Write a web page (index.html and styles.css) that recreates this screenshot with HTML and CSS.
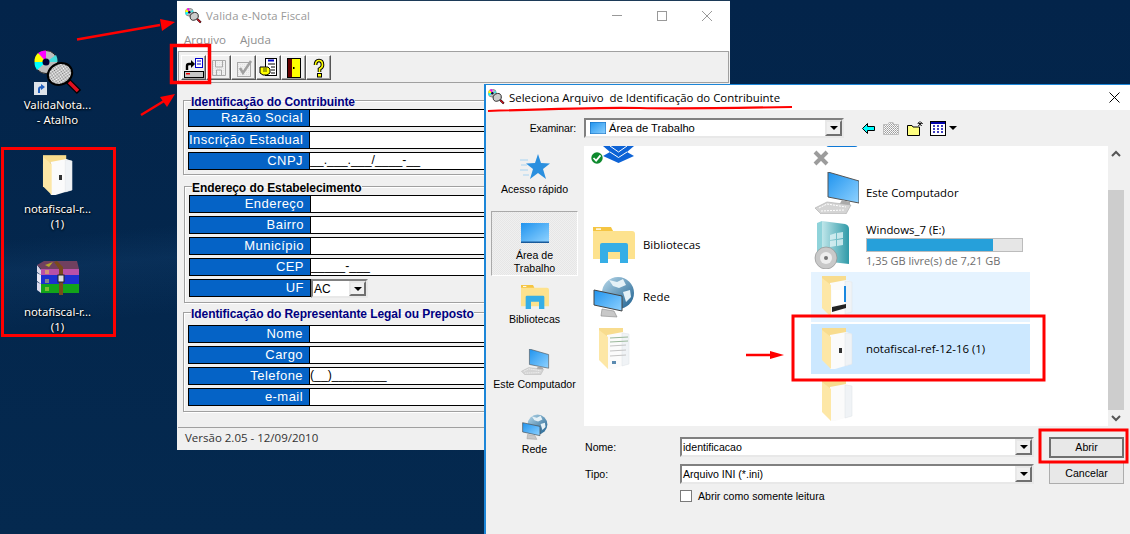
FILE: index.html
```html
<!DOCTYPE html>
<html lang="pt-BR">
<head>
<meta charset="utf-8">
<title>Valida e-Nota Fiscal</title>
<link rel="stylesheet" href="styles.css">
</head>
<body>
<svg class="defs" width="0" height="0" aria-hidden="true">
  <defs>
    <pattern id="dither" width="2" height="2" patternUnits="userSpaceOnUse">
      <rect width="2" height="2" fill="#fff"/><rect width="1" height="1" fill="#777"/><rect x="1" y="1" width="1" height="1" fill="#999"/>
    </pattern>
    <pattern id="dither2" width="2" height="2" patternUnits="userSpaceOnUse">
      <rect width="2" height="2" fill="#f0f0f0"/><rect width="1" height="1" fill="#e2e2e2"/>
    </pattern>
    <linearGradient id="scr" x1="0" y1="0" x2="1" y2="1">
      <stop offset="0" stop-color="#1f93ee"/><stop offset="1" stop-color="#8fd2ff"/>
    </linearGradient>
    <linearGradient id="glob" x1="0" y1="0" x2="1" y2="1">
      <stop offset="0" stop-color="#b8d9ea"/><stop offset="1" stop-color="#1c5f8f"/>
    </linearGradient>
    <linearGradient id="teal" x1="0" y1="0" x2="1" y2="0">
      <stop offset="0" stop-color="#bfe6ea"/><stop offset="1" stop-color="#2f9aa8"/>
    </linearGradient>
    <symbol id="app" viewBox="0 0 48 46">
      <circle cx="12" cy="12" r="11.5" fill="#bdbdbd" stroke="#222"/>
      <path d="M12 12 L4 3 A11.5 11.5 0 0 1 12 .5Z" fill="#f0f"/>
      <path d="M12 12 L.5 12 A11.5 11.5 0 0 1 4 3Z" fill="#ff0"/>
      <path d="M12 12 L3 20 A11.5 11.5 0 0 1 .5 12Z" fill="#0ff"/>
      <path d="M12 12 L22 5 A11.5 11.5 0 0 1 23.5 12Z" fill="#4dd"/>
      <circle cx="12" cy="12" r="3.5" fill="#003"/>
      <line x1="34" y1="31" x2="45" y2="42" stroke="#000" stroke-width="6"/>
      <line x1="35" y1="32" x2="44" y2="41" stroke="#e01020" stroke-width="3.5"/>
      <ellipse cx="26" cy="24" rx="12.5" ry="10.5" transform="rotate(-25 26 24)" fill="url(#dither)" stroke="#000" stroke-width="2"/>
    </symbol>
    <symbol id="fback" viewBox="0 0 32 42">
      <path d="M1 0H25V8H1Z" fill="#f8dc8e"/>
      <path d="M9 7L25 4L31 6V36L14 41H9Z" fill="#fbfbfb"/>
      <path d="M24 5L31 6V36L24 38Z" fill="#f0f3f6" stroke="#dfe3e7" stroke-width=".5"/>
      <path d="M1 2L10 9V41L1 32Z" fill="#fde7a6"/>
    </symbol>
    <symbol id="lib" viewBox="0 0 42 36">
      <path d="M0 3Q0 0 3 0H16L20 4H39Q42 4 42 7V32H0Z" fill="#fde28e"/>
      <path d="M0 0H18L20 4H0Z" fill="#f5c542"/>
      <rect x="3" y="1.400" width="5" height="1.400" fill="#fff"/>
      <path d="M7 36V18Q7 16 9 16H33Q35 16 35 18V36H27V25H15V36Z" fill="#36aee6"/>
    </symbol>
    <symbol id="pc" viewBox="0 0 44 42">
      <path d="M13 0L44 9V31L13 25Z" fill="url(#scr)" stroke="#555"/>
      <path d="M27 28L35 30V33H24Z" fill="#aaa"/>
      <path d="M0 36L12 30L36 33L31 42H6Z" fill="#d4d4d4" stroke="#aaa" stroke-width=".6"/>
      <path d="M4 36L12 32L31 35M6 39L29 38" stroke="#fff" fill="none" stroke-dasharray="2 1"/>
    </symbol>
    <symbol id="net" viewBox="0 0 42 42">
      <circle cx="25" cy="17" r="16" fill="url(#glob)"/>
      <path d="M16 4L24 6L30 3L33 9L26 12L20 10ZM30 16L37 14L38 21L33 26Z" fill="#e5f1f7"/>
      <path d="M1 14L29 20V35L1 29Z" fill="url(#scr)" stroke="#444"/>
      <path d="M9 33L21 35L24 41L8 40Z" fill="#c8c8c8" stroke="#888" stroke-width=".6"/>
    </symbol>
    <symbol id="w7" viewBox="0 0 38 48">
      <path d="M9 0L32 3Q36 4 36 8V43L9 40Z" fill="url(#teal)"/>
      <path d="M9 0L4 2V38L9 40Z" fill="#8fd3da"/>
      <path d="M17 14L23 12V18L17 19ZM24 12L30 11V17L24 18ZM17 20L23 19V25L17 26ZM24 19L30 18V24L24 25Z" fill="#dff3f5" opacity=".8"/>
      <circle cx="13" cy="37" r="11" fill="#c9c9c9" stroke="#888" stroke-width=".6"/>
      <circle cx="13" cy="37" r="6" fill="#eee"/>
      <circle cx="13" cy="37" r="2" fill="#777"/>
    </symbol>
    <symbol id="ccheck" viewBox="0 0 16 16">
      <circle cx="8" cy="8" r="7.500" fill="#fff"/>
      <circle cx="8" cy="8" r="6.500" fill="#0e8a2e"/>
      <path d="M4 8L7 11L12 5" fill="none" stroke="#fff" stroke-width="2"/>
    </symbol>
  </defs>
</svg>

<main class="desktop">
  <section class="dicons">
    <div class="dicon">
      <div class="dicon-img">
        <svg class="ic-app" width="48" height="46"><use href="#app"/></svg>
        <svg class="ic-short" viewBox="0 0 13 13" width="13" height="13"><rect width="13" height="13" fill="#dde3ea"/><path d="M4 11V7Q4 4 8 4H7L7 2L11 5L7 8V6Q6 6 6 8V11Z" fill="#1f5fc0"/></svg>
      </div>
      <span>ValidaNota...<br>- Atalho</span>
    </div>
    <div class="dicon">
      <div class="dicon-img"><svg class="ic-fold" width="31" height="41"><use href="#fback"/><rect x="17" y="20" width="3" height="5" fill="#333"/></svg></div>
      <span>notafiscal-r...<br>(1)</span>
    </div>
    <div class="dicon">
      <div class="dicon-img">
        <svg class="ic-rar" viewBox="0 0 42 34" width="42" height="34">
          <path d="M0 21L4 23V32L0 29Z" fill="#dcdcee"/><path d="M4 23H42V32H4Z" fill="#12a41a"/>
          <path d="M0 12L4 14V23L0 20Z" fill="#e8e8f4"/><path d="M4 14H42V23H4Z" fill="#1c2fd0"/>
          <path d="M0 4L4 9V14L0 11Z" fill="#d8d8e8"/><path d="M4 8H42V14H4Z" fill="#b850a8"/>
          <path d="M0 4L7 0H40L42 8H4Z" fill="#70405f"/><path d="M8 4L16 1L12 6Z" fill="#b5a72a"/>
          <path d="M20 0L26 6V34H22V8L17 1Z" fill="#7a4a1c"/>
          <rect x="21" y="14" width="6" height="7" fill="#ddd" stroke="#222"/>
          <path d="M9 9V13M11 9V13M9 18V22M11 18V22M9 26V30M11 26V30" stroke="#e8d84a"/>
        </svg>
      </div>
      <span>notafiscal-r...<br>(1)</span>
    </div>
  </section>

  <section class="win-main">
    <header class="tbar">
      <svg class="tico" width="17" height="16"><use href="#app"/></svg>
      <span class="ttext">Valida e-Nota Fiscal</span>
      <div class="wctrls">
        <svg width="12" height="12" viewBox="0 0 12 12"><path d="M1 5.500H11" stroke="#999" fill="none"/></svg>
        <svg width="12" height="12" viewBox="0 0 12 12"><rect x="1.500" y="1.500" width="9" height="9" stroke="#999" fill="none"/></svg>
        <svg width="12" height="12" viewBox="0 0 12 12"><path d="M1 1L11 11M11 1L1 11" stroke="#999" fill="none"/></svg>
      </div>
    </header>
    <nav class="menu"><span>Arquivo</span><span>Ajuda</span></nav>
    <div class="toolbar">
      <div class="tbtn"><svg viewBox="0 0 20 20" width="20" height="20">
        <rect x="11.500" y=".5" width="7" height="9" fill="#fff" stroke="#00c"/><path d="M13 3H17M13 6H17" stroke="#00c"/>
        <path d="M3 12V8Q3 6 5 6H8" fill="none" stroke="#000" stroke-width="2.400"/><path d="M7 2L11 6L7 10Z" fill="#000"/>
        <rect x=".5" y="13.500" width="19" height="6" fill="#c6c6c6" stroke="#000"/><rect x="2" y="15" width="4" height="1.500" fill="#e00"/>
      </svg></div>
      <div class="tbtn"><svg viewBox="0 0 20 20" width="20" height="20">
        <path d="M3.500 2.500H16.500V17.500H3.500Z" fill="url(#dither2)" stroke="#a8a8a8"/><path d="M6.500 3V9H13.500V3M7.500 17V12H12.500V17" fill="none" stroke="#a8a8a8"/>
      </svg></div>
      <div class="tbtn"><svg viewBox="0 0 20 20" width="20" height="20">
        <rect x="3.500" y="4.500" width="13" height="14" fill="url(#dither2)" stroke="#a8a8a8"/><path d="M6 10L9 15L17 3" fill="none" stroke="#a0a0a0" stroke-width="2.500"/>
      </svg></div>
      <div class="tbtn"><svg viewBox="0 0 20 20" width="20" height="20">
        <rect x="6.500" y=".5" width="11" height="17" fill="#fff" stroke="#000"/><path d="M9 2.500H15" stroke="#00c" stroke-width="2"/><path d="M9 6H16M12 9H16M12 12H16M12 15H16" stroke="#000"/>
        <path d="M1 9H9L11 11V15L8 17H4L1 15Z" fill="#ff0" stroke="#000"/><path d="M4 11H8M4 13H8" stroke="#000" stroke-width=".7"/>
      </svg></div>
      <div class="tbtn"><svg viewBox="0 0 20 20" width="20" height="20">
        <rect x="3.500" y=".5" width="13" height="19" fill="#600" stroke="#000"/><path d="M8 1H16V19H8Z" fill="#ff0"/><rect x="9" y="9" width="1.500" height="2" fill="#000"/>
      </svg></div>
      <div class="tbtn"><svg viewBox="0 0 20 20" width="20" height="20">
        <path d="M6.500 7Q6.500 2.500 10 2.500Q13.500 2.500 13.500 7Q13.500 9.500 10.500 11V14" fill="none" stroke="#000" stroke-width="3.600"/>
        <path d="M6.500 7Q6.500 2.500 10 2.500Q13.500 2.500 13.500 7Q13.500 9.500 10.500 11V14" fill="none" stroke="#ff0" stroke-width="1.600"/>
        <rect x="8.500" y="15.500" width="4" height="3.500" fill="#ff0" stroke="#000"/>
      </svg></div>
    </div>
    <div class="form">
      <fieldset class="grp grp-a">
        <legend class="navy">Identificação do Contribuinte</legend>
        <div class="row"><label>Razão Social</label><div class="val"></div></div>
        <div class="row row-x"><label>Inscrição Estadual</label><div class="val"></div></div>
        <div class="row"><label>CNPJ</label><div class="val">__.___.___/____-__</div></div>
      </fieldset>
      <fieldset class="grp grp-b">
        <legend>Endereço do Estabelecimento</legend>
        <div class="row"><label>Endereço</label><div class="val"></div></div>
        <div class="row"><label>Bairro</label><div class="val"></div></div>
        <div class="row"><label>Município</label><div class="val"></div></div>
        <div class="row"><label>CEP</label><div class="val">_____-___</div></div>
        <div class="row row-uf"><label>UF</label>
          <div class="combo combo-uf"><span>AC</span><i class="arrow"></i></div>
        </div>
      </fieldset>
      <fieldset class="grp grp-c">
        <legend class="navy">Identificação do Representante Legal ou Preposto</legend>
        <div class="row"><label>Nome</label><div class="val"></div></div>
        <div class="row"><label>Cargo</label><div class="val"></div></div>
        <div class="row"><label>Telefone</label><div class="val">(__)________</div></div>
        <div class="row"><label>e-mail</label><div class="val"></div></div>
      </fieldset>
    </div>
    <footer class="status">Versão 2.05 - 12/09/2010</footer>
  </section>

  <section class="win-dlg">
    <header class="dtitle">
      <svg width="17" height="16"><use href="#app"/></svg>
      <span class="dttext">Seleciona Arquivo  de Identificação do Contribuinte</span>
      <svg class="dclose" width="11" height="11" viewBox="0 0 11 11"><path d="M.5 .5L10.500 10.500M10.500 .5L.5 10.500" stroke="#000" fill="none"/></svg>
    </header>
    <div class="dlookin">
      <span class="dl-label">Examinar:</span>
      <div class="combo combo-look">
        <svg width="16" height="12" viewBox="0 0 16 12"><rect width="16" height="12" fill="url(#scr)" stroke="#1469b8"/></svg>
        <span>Área de Trabalho</span><i class="arrow"></i>
      </div>
      <div class="dtools">
        <svg width="13" height="11" viewBox="0 0 13 11"><path d="M.5 5.500L5.500 .5V3.500H12.500V7.500H5.500V10.500Z" fill="#0ff" stroke="#000"/></svg>
        <svg width="16" height="13" viewBox="0 0 16 13"><path d="M.5 2.500H5L6 .5H10L11 2.500H15.500V12.500H.5Z" fill="url(#dither)" stroke="#aaa" opacity=".7"/></svg>
        <svg width="17" height="15" viewBox="0 0 17 15"><path d="M.5 4.500H5L6 6H12.500V14.500H.5Z" fill="#ffff80" stroke="#000"/><path d="M13 0V5M10.500 2.500H16M11 1L15 5M15 1L11 5" stroke="#000" stroke-width=".7"/></svg>
        <div class="view-ic">
          <svg width="17" height="15" viewBox="0 0 17 15"><rect x=".5" y=".5" width="15" height="14" fill="#fff" stroke="#000"/><rect x="1" y="1" width="14" height="2" fill="#00a"/><path d="M3 5H5M7 5H9M11 5H13M3 8H5M7 8H9M11 8H13M3 11H5M7 11H9M11 11H13" stroke="#00a" stroke-width="1.500"/></svg>
          <i class="tri"></i>
        </div>
      </div>
    </div>
    <div class="dmid">
      <aside class="places">
        <div class="place">
          <svg class="pl-star" viewBox="0 0 30 26" width="30" height="26"><path d="M18 0L21 9L30 9.500L23 15L26 25L18 19L10 25L13 15L6 9.500L15 9Z" fill="#2a8fdf"/><path d="M0 6H8M1 11H7M0 16H8M3 21H9" stroke="#a8d4f2"/></svg>
          <span>Acesso rápido</span>
        </div>
        <div class="place place-on">
          <svg viewBox="0 0 28 20" width="28" height="20"><rect width="28" height="19" fill="url(#scr)"/><rect y="18.500" width="28" height="1.500" fill="#1a5a9a"/></svg>
          <span>Área de<br>Trabalho</span>
        </div>
        <div class="place">
          <svg width="28" height="24"><use href="#lib"/></svg>
          <span>Bibliotecas</span>
        </div>
        <div class="place">
          <svg width="30" height="28"><use href="#pc"/></svg>
          <span>Este Computador</span>
        </div>
        <div class="place">
          <svg width="28" height="28"><use href="#net"/></svg>
          <span>Rede</span>
        </div>
      </aside>
      <div class="files">
        <div class="fgrid">
          <div class="fitem fl fi-end">
            <svg class="ic-drop" viewBox="0 0 31 17" width="31" height="17"><path d="M0 0H31L24 6L31 10L15.500 17L0 10L7 6Z" fill="#0d63d6"/><path d="M7 0L15.500 6L24 0M7 6L15.500 11.500L24 6" fill="none" stroke="#fff"/></svg>
            <svg class="badge" width="14" height="14"><use href="#ccheck"/></svg>
          </div>
          <div class="fitem fr fi-end">
            <svg viewBox="0 0 48 24" width="48" height="24"><rect x="13" y="-4" width="32" height="9" rx="3" fill="#0d78d6"/><path d="M2 10L14 22M14 10L2 22" stroke="#9c9c9c" stroke-width="4"/></svg>
          </div>
          <div class="fitem fl"></div>
          <div class="fitem fr">
            <svg class="fic ic-pc" width="44" height="42"><use href="#pc"/></svg>
            <span>Este Computador</span>
          </div>
          <div class="fitem fl">
            <svg class="fic" width="42" height="36"><use href="#lib"/></svg>
            <span>Bibliotecas</span>
          </div>
          <div class="fitem fr">
            <svg class="fic ic-w7" width="38" height="48"><use href="#w7"/></svg>
            <div class="drive">
              <span>Windows_7 (E:)</span>
              <div class="dbar"><div class="dfill"></div></div>
              <span class="dfree">1,35 GB livre(s) de 7,21 GB</span>
            </div>
          </div>
          <div class="fitem fl">
            <svg class="fic" width="42" height="42"><use href="#net"/></svg>
            <span>Rede</span>
          </div>
          <div class="fitem fr f-hover">
            <svg class="fold" width="32" height="42"><use href="#fback"/><rect x="11" y="14" width="13" height="15" fill="#fff"/><rect x="23" y="10" width="2" height="16" fill="#1a88e0"/><path d="M11 31L25 28V32L11 36Z" fill="#222"/></svg>
          </div>
          <div class="fitem fl">
            <svg class="fold" width="32" height="42"><use href="#fback"/><path d="M12 10L30 9M12 14L30 13" stroke="#9ab89a"/><path d="M12 18L28 17M12 23L28 22M12 28L28 27" stroke="#c4c4c4"/><rect x="14" y="33" width="4" height="3" fill="#5a8ab0"/></svg>
          </div>
          <div class="fitem fr f-sel">
            <svg class="fold" width="32" height="42"><use href="#fback"/><rect x="18" y="20" width="3" height="5" fill="#333"/></svg>
            <span>notafiscal-ref-12-16 (1)</span>
          </div>
          <div class="fitem fl"></div>
          <div class="fitem fr">
            <svg class="fold" width="32" height="42"><use href="#fback"/></svg>
          </div>
        </div>
      </div>
      <div class="scroll">
        <svg width="16" height="16" viewBox="0 0 16 16"><path d="M4 10L8 6L12 10" fill="none" stroke="#555" stroke-width="2"/></svg>
        <div class="track"><div class="thumb"></div></div>
        <svg width="16" height="16" viewBox="0 0 16 16"><path d="M4 6L8 10L12 6" fill="none" stroke="#555" stroke-width="2"/></svg>
      </div>
    </div>
    <div class="dform">
      <span class="flab">Nome:</span>
      <div class="combo combo-f"><span>identificacao</span><i class="arrow"></i></div>
      <button class="btn btn-def">Abrir</button>
      <span class="flab">Tipo:</span>
      <div class="combo combo-f"><span>Arquivo INI (*.ini)</span><i class="arrow"></i></div>
      <button class="btn btn-can">Cancelar</button>
      <div class="chk"><i class="box"></i><span>Abrir como somente leitura</span></div>
    </div>
  </section>

  <svg class="marks" width="1130" height="534" viewBox="0 0 1130 534" aria-hidden="true">
    <g fill="none" stroke="#f00">
      <rect x="2.500" y="148.500" width="112" height="187" stroke-width="3"/>
      <rect x="171.500" y="45.500" width="38" height="37" stroke-width="3.500"/>
      <rect x="793" y="316" width="251" height="64" stroke-width="3"/>
      <rect x="1040" y="430" width="87" height="32" stroke-width="3"/>
      <path d="M77 39.500L160 25" stroke-width="2.500"/>
      <path d="M141 115L164 101" stroke-width="2.500"/>
      <path d="M746 355H772" stroke-width="2.500"/>
      <path d="M488 111Q600 107 640 108T792 107" stroke-width="2.200"/>
    </g>
    <g fill="#f00">
      <path d="M175 22L160 19L162 31Z"/>
      <path d="M175 94L160 97L167 107Z"/>
      <path d="M784 355L770 351V359Z"/>
    </g>
  </svg>
</main>
</body>
</html>
```

FILE: styles.css
```css
* { box-sizing: border-box; }
html, body { margin: 0; padding: 0; }
body {
  width: 1130px;
  height: 534px;
  overflow: hidden;
  font-family: "Open Sans", "Noto Sans", sans-serif;
  font-size: 11.4px;
  color: #000;
}
.defs { position: absolute; }
.desktop {
  position: relative;
  width: 1130px;
  height: 534px;
  overflow: hidden;
  background:
    linear-gradient(175deg, transparent 38%, rgba(40, 100, 160, .14) 43%, transparent 52%),
    linear-gradient(180deg, #03244a, #04294f);
}

/* desktop icons */
.dicons {
  position: absolute;
  left: 20px;
  top: 50px;
  width: 75px;
  display: grid;
  grid-auto-rows: 103.5px;
}
.dicon { display: flex; flex-direction: column; align-items: center; }
.dicon-img { position: relative; height: 48px; width: 75px; display: flex; justify-content: center; align-items: flex-start; flex: none; }
.dicon span {
  color: #fff;
  font-family: "Noto Sans", sans-serif;
  font-size: 11.4px;
  line-height: 15px;
  text-align: center;
  margin-top: -1px;
  text-shadow: 0 1px 2px #000, 0 0 2px #000;
  white-space: nowrap;
}
.ic-fold { margin-top: 1px; }
.ic-rar { margin-top: 4px; }
.ic-short { position: absolute; left: 14px; top: 32px; }

/* main window */
.win-main {
  position: absolute;
  left: 177px;
  top: 0;
  width: 553px;
  height: 450px;
  background: #f0f0f0;
  display: flex;
  flex-direction: column;
}
.tbar {
  height: 30px;
  flex: none;
  background: #fff;
  border-top: 1px solid #1c3a58;
  display: flex;
  align-items: center;
  padding-left: 8px;
  gap: 4px;
}
.ttext { color: #999; font-size: 11.300px; letter-spacing: .1px; }
.wctrls { margin-left: auto; display: flex; gap: 33px; padding-right: 17px; }
.menu {
  height: 21px;
  flex: none;
  background: #fff;
  color: #8f8f8f;
  display: flex;
  align-items: center;
  gap: 14px;
  padding: 0 0 2px 7px;
  font-size: 11.6px;
}
.toolbar {
  height: 32px;
  flex: none;
  margin: 0 1px;
  background: #f0f0f0;
  border: 1px solid #a0a0a0;
  padding: 3px 0 0 2px;
  display: flex;
}
.tbtn {
  width: 25px;
  height: 25px;
  display: flex;
  align-items: center;
  justify-content: center;
  background: #f0f0f0;
  border: 1px solid;
  border-color: #fff #555 #555 #fff;
  box-shadow: inset -1px -1px 0 #a0a0a0;
}
.form {
  flex: 1;
  padding: 9px 5px 0 6px;
}
.grp {
  margin: 0;
  padding: 1px 4px 4px;
  border: 1px solid #a0a0a0;
  box-shadow: 1px 1px 0 #fff, inset 1px 1px 0 #fff;
  width: 540px;
}
.grp legend {
  padding: 4px 0 0;
  margin-left: 3px;
  font-family: "Liberation Sans", sans-serif;
  font-weight: bold;
  font-size: 12px;
  line-height: 12px;
  letter-spacing: -.07px;
  color: #000;
}
.grp legend.navy { color: #000080; }
.grp-b { margin: 3px 0 0 1px; padding-bottom: 5px; }
.grp-c { margin-top: 1px; padding-top: 5px; padding-bottom: 5px; }
.row {
  display: flex;
  height: 18px;
  margin-top: 3px;
  border: 1px solid #000;
  background: #fff;
}
.row:first-of-type { margin-top: 0; }
.row-x { margin-top: 4px; }
.row label {
  width: 121px;
  flex: none;
  background: #0563c6;
  color: #fff;
  border-right: 1px solid #000;
  text-align: right;
  padding-right: 6px;
  font-family: "Liberation Sans", sans-serif;
  font-size: 13px;
  line-height: 16px;
  letter-spacing: .45px;
  white-space: nowrap;
}
.val {
  flex: 1;
  font-family: "Liberation Sans", sans-serif;
  font-size: 12.300px;
  line-height: 15px;
}
.row-uf { background: transparent; border: 0; }
.row-uf label { border: 1px solid #000; width: 122px; }
.status {
  height: 23px;
  flex: none;
  border-top: 1px solid #a0a0a0;
  margin: 0 1px;
  padding-left: 7px;
  color: #333;
  font-size: 11.5px;
  line-height: 20px;
}

/* combos */
.combo {
  display: flex;
  align-items: center;
  background: #fff;
  border: 2px solid;
  border-color: #808080 #e8e8e8 #e8e8e8 #808080;
  padding-left: 1px;
  font-family: "Liberation Sans", sans-serif;
  font-size: 11px;
}
.arrow {
  margin-left: auto;
  width: 17px;
  height: 100%;
  flex: none;
  background: #f0f0f0;
  border: 2px solid;
  border-color: #e8e8e8 #707070 #707070 #e8e8e8;
  display: flex;
  align-items: center;
  justify-content: center;
}
.arrow::after {
  content: "";
  border-style: solid;
  border-width: 4px 4px 0;
  border-color: #000 transparent transparent;
}
.combo-uf { width: 57px; height: 19px; font-size: 12px; }

/* dialog */
.win-dlg {
  position: absolute;
  left: 484px;
  top: 84px;
  width: 646px;
  height: 450px;
  background: #f0f0f0;
  border-left: 2px solid #1c86d8;
  border-top: 1px solid #1c86d8;
  display: flex;
  flex-direction: column;
}
.dtitle {
  height: 25px;
  flex: none;
  background: #fff;
  display: flex;
  align-items: center;
  padding: 0 0 1px 2px;
  gap: 4px;
}
.dttext { white-space: pre; font-size: 11.4px; color: #000; }
.dclose { margin-left: auto; margin-right: 10px; }
.dlookin {
  height: 36px;
  flex: none;
  display: flex;
  align-items: flex-start;
  padding-top: 8px;
}
.dl-label { width: 90px; text-align: right; line-height: 20px; font-family: "Liberation Sans", sans-serif; font-size: 10.500px; letter-spacing: -.1px; }
.combo-look { margin-left: 8px; width: 260px; height: 20px; gap: 3px; padding-left: 4px; font-size: 11.2px; }
.dtools { display: flex; align-items: center; height: 20px; gap: 8px; margin-left: 18px; }
.view-ic { display: flex; align-items: center; gap: 2px; margin-left: -2px; }
.tri { border-style: solid; border-width: 4px 4px 0; border-color: #000 transparent transparent; }
.dmid { height: 280px; flex: none; display: flex; }
.places { width: 98px; flex: none; display: flex; flex-direction: column; padding-left: 5px; }
.place {
  width: 87px;
  height: 65px;
  flex: none;
  display: flex;
  flex-direction: column;
  align-items: center;
  text-align: center;
  padding-top: 8px;
  font-family: "Liberation Sans", sans-serif;
  font-size: 10.600px;
  line-height: 13px;
  white-space: nowrap;
}
.place svg { height: 26px; flex: none; }
.place span { margin-top: 3px; }
.place-on {
  border: 1px solid #a9a9a9;
  border-right-color: #fff;
  border-bottom-color: #fff;
  background: repeating-conic-gradient(#f0f0f0 0 25%, #e6e6e6 0 50%) 0 0 / 2px 2px;
}
.files { width: 524px; flex: none; background: #fff; overflow: hidden; }
.fgrid {
  display: grid;
  height: 100%;
  grid-template-columns: 227px 219px;
  grid-template-rows: repeat(6, 50px);
  row-gap: 2px;
  align-content: end;
}
.fitem {
  position: relative;
  display: flex;
  align-items: center;
  font-size: 11.4px;
  white-space: nowrap;
}
.fitem > span { margin-bottom: 2px; }
.fl { padding-left: 9px; }
.fr { padding-left: 2px; }
.fi-end { align-items: flex-end; }
.fl .fic { margin-right: 8px; }
.ic-pc { margin: 0 7px 0 2px; }
.ic-w7 { margin-right: 15px; }
.fr .fold { margin: 0 13px 0 8px; }
.fl .fold { margin-left: 5px; }
.ic-drop { margin: 0 0 3px 10px; }
.badge { position: absolute; left: 6px; bottom: 1px; }
.f-hover { background: #e5f3ff; }
.f-sel { background: #cce8ff; }
.drive { display: flex; flex-direction: column; line-height: 15px; }
.dbar { width: 157px; height: 14px; margin-top: 1px; background: #e6e6e6; border: 1px solid #bcbcbc; }
.dfill { width: 81%; height: 100%; background: #26a0da; }
.dfree { color: #6d6d6d; margin-top: 1px; font-size: 11px; }
.scroll { width: 16px; flex: none; display: flex; flex-direction: column; background: #f0f0f0; }
.track { flex: 1; padding-top: 28px; }
.thumb { height: 220px; background: #cdcdcd; }
.dform {
  display: grid;
  grid-template-columns: 95px 354px 75px;
  grid-auto-rows: 20px;
  row-gap: 7px;
  padding: 11px 0 0 99px;
  align-items: center;
  font-family: "Liberation Sans", sans-serif;
  font-size: 10.600px;
}
.combo-f { height: 20px; width: 354px; grid-column: 2; font-size: 10.600px; }
.flab { grid-column: 1; }
.btn {
  font: inherit;
  grid-column: 3;
  margin-left: 15px;
  width: 75px;
  background: #e8e8e8;
  border: 1px solid #adadad;
  padding: 0;
  color: #000;
}
.btn-def { height: 21px; border: 2px solid #707070; }
.btn-can { height: 22px; margin-top: -2px; }
.chk { grid-column: 2 / 4; display: flex; align-items: center; gap: 6px; align-self: start; margin-top: -2px; height: 14px; }
.box { width: 12px; height: 12px; background: #fff; border: 1px solid #7a7a7a; }

.marks { position: absolute; left: 0; top: 0; pointer-events: none; }
```
